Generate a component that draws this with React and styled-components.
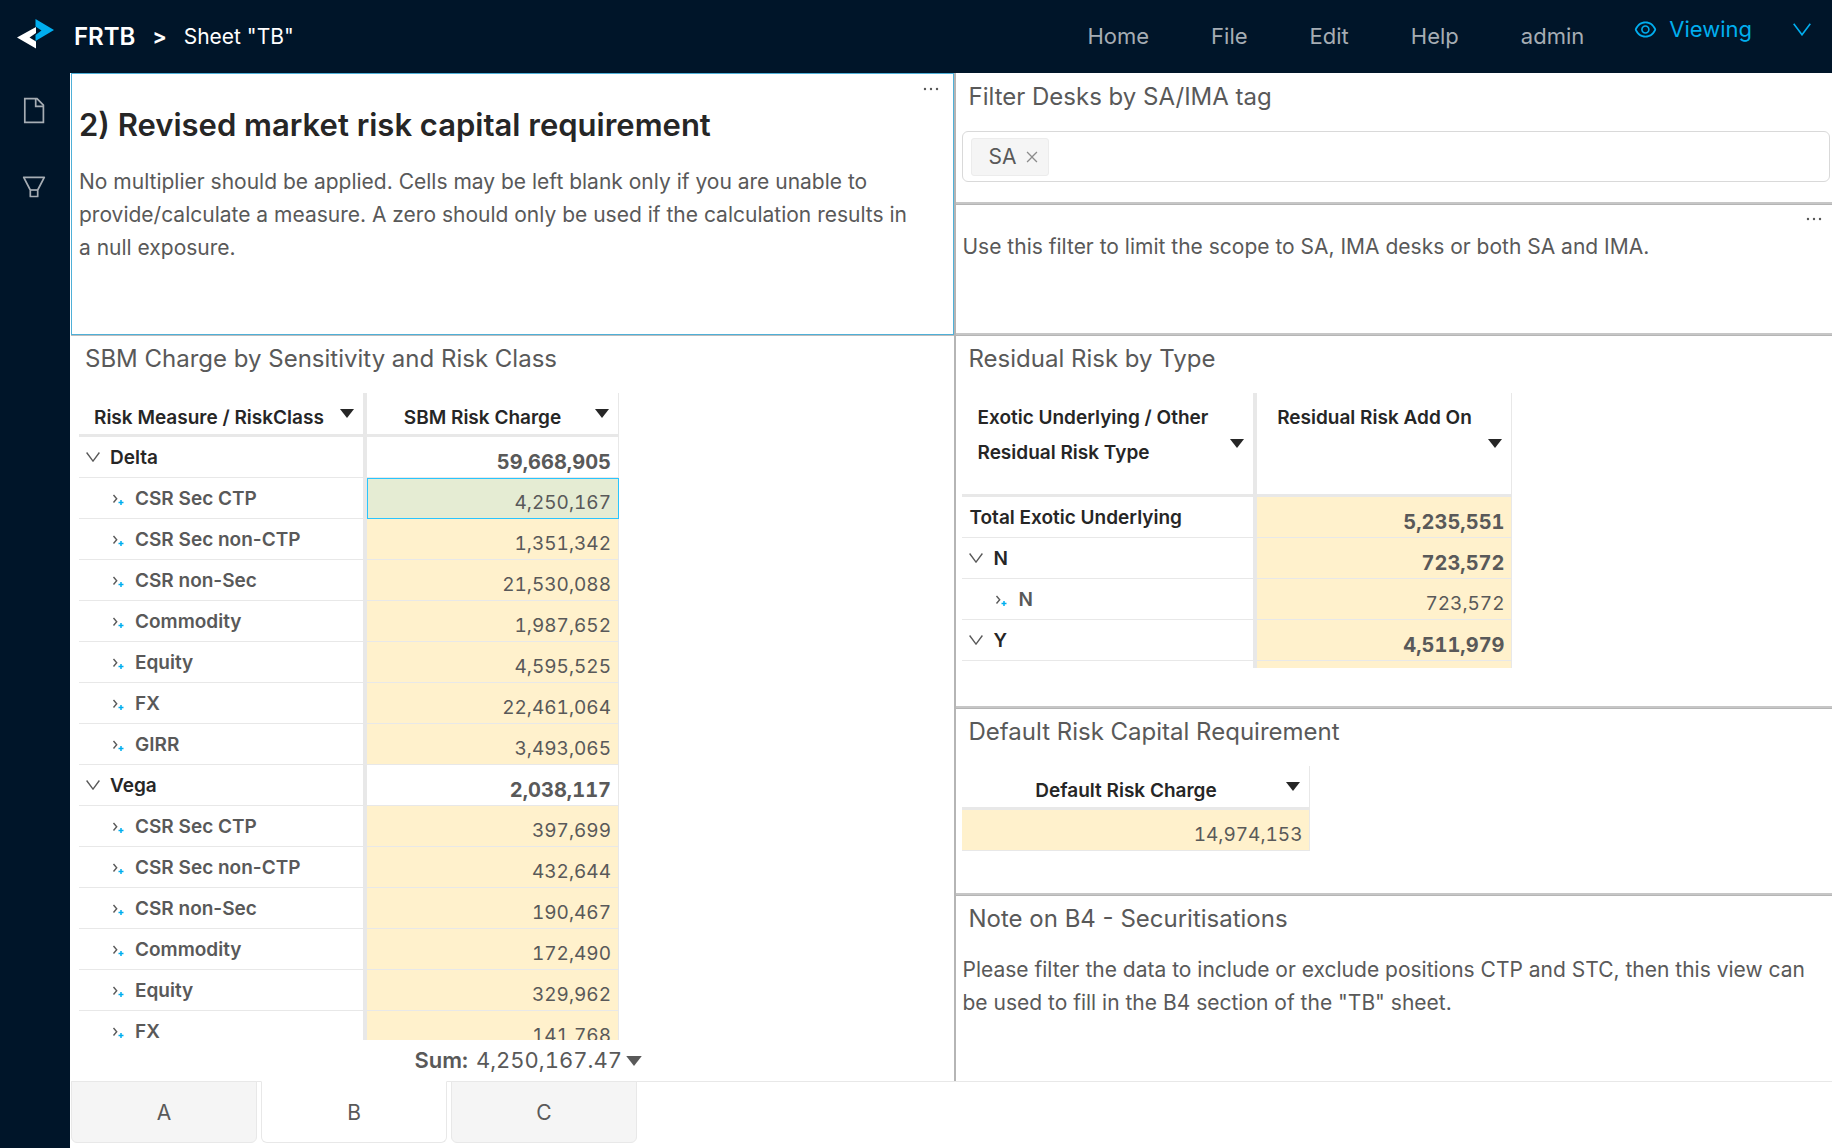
import React from "react";
import styled, { createGlobalStyle, css } from "styled-components";
import { AiOutlineEye, AiOutlineClose, AiOutlineEllipsis } from "react-icons/ai";

const GlobalStyle = createGlobalStyle`
  *, *::before, *::after { box-sizing: border-box; }
  body {
    margin: 0;
    font-family: Inter, "Liberation Sans", sans-serif;
    font-size: 21px;
    line-height: 33px;
    color: #595959;
    background: #fff;
  }
  button, input { font: inherit; color: inherit; }
  button { padding: 0; border: 0; background: none; cursor: pointer; }
  h1, h2, p { margin: 0; }
  svg { display: block; flex: none; }
`;

const Page = styled.div`
  display: flex;
  flex-direction: column;
  height: 100vh;
  min-height: 720px;
`;

const Header = styled.header`
  display: flex;
  flex: none;
  align-items: flex-start;
  height: 73px;
  padding: 0 21px 0 17px;
  background: #001529;
`;

const Breadcrumb = styled.div`
  display: flex;
  flex: 1;
  align-items: center;
  height: 73px;
  color: #fff;
  white-space: pre;
`;

const Logo = styled.svg`
  margin: 0 20px 6px 0;
`;

const AppName = styled.span`
  font-size: 24px;
  font-weight: 600;
`;

const Separator = styled.span`
  margin: 0 17px;
  font-weight: 700;
`;

const Menu = styled.nav`
  display: flex;
  align-items: center;
  gap: 62px;
  height: 73px;
`;

const MenuButton = styled.button`
  font-size: 22px;
  color: #a6adb4;
`;

const ModeButton = styled.button`
  display: flex;
  align-items: center;
  height: 58px;
  margin-left: 49px;
  font-size: 22px;
  color: #00aeef;
`;

const ModeLabel = styled.span`
  margin: 0 41px 0 11px;
`;

const Body = styled.div`
  display: flex;
  flex: 1;
  min-height: 0;
`;

const Sidebar = styled.aside`
  display: flex;
  flex: none;
  flex-direction: column;
  align-items: center;
  gap: 52px;
  width: 70px;
  padding: 24px 3px 0 0;
  color: #a6adb4;
  background: #001529;
`;

const Main = styled.main`
  display: flex;
  flex: 1;
  flex-direction: column;
  min-width: 0;
  padding-left: 1px;
`;

const Dashboard = styled.div`
  display: grid;
  flex: 1;
  grid-template-columns: minmax(0, 442fr) minmax(0, 439fr);
  min-height: 0;
`;

const Column = styled.div`
  display: grid;
  grid-template-rows: ${(p) => p.$rows};
  min-height: 0;
  border-left: ${(p) => (p.$divided ? "2px solid #b5b5b5" : "0")};
`;

const Panel = styled.section`
  position: relative;
  display: flex;
  flex-direction: column;
  min-height: 0;
  padding: 0 2px 0 ${(p) => (p.$left ? 8 : 6)}px;
  ${(p) =>
    !p.$last &&
    css`
      border-bottom: 2px solid #c6c6c6;
      box-shadow: 0 1px #b5b5b5;
    `}
  ${(p) =>
    p.$selected &&
    css`
      padding: 0 34px 0 7px;
      border: 1px solid #4fb0d8;
      box-shadow: 0 1px #bdbdbd;
    `}
`;

const PanelTitle = styled.h2`
  flex: none;
  padding: 7px 6px 18px;
  font-size: 24px;
  font-weight: 400;
`;

const Heading = styled.h1`
  margin: 30px 0 19px;
  font-size: 31px;
  font-weight: 600;
  line-height: 42px;
  color: #262626;
`;

const Text = styled.p`
  padding-top: ${(p) => p.$top || 0}px;
`;

const MoreButton = styled.button`
  position: absolute;
  top: 4px;
  right: ${(p) => p.$right}px;
`;

const TagBox = styled.div`
  display: flex;
  align-items: center;
  height: 51px;
  padding: 0 8px;
  border: 1px solid #d9d9d9;
  border-radius: 6px;
`;

const Tag = styled.span`
  display: flex;
  align-items: center;
  gap: 8px;
  height: 38px;
  padding: 0 8px 0 16px;
  border: 1px solid #ececec;
  border-radius: 3px;
  background: #f5f5f5;
`;

const TagRemove = styled.button`
  color: #8c8c8c;
`;

const TagInput = styled.input`
  flex: 1;
  min-width: 0;
  border: 0;
  outline: 0;
  background: none;
`;

const TableView = styled.div`
  flex: ${(p) => (p.$fill ? "1" : "none")};
  min-height: 0;
  max-height: ${(p) => (p.$maxHeight ? p.$maxHeight + "px" : "none")};
  overflow: hidden;
`;

const Table = styled.table`
  width: ${(p) => p.$width}px;
  table-layout: fixed;
  border-collapse: separate;
  border-spacing: 0;
  font-size: 19px;
`;

const Col = styled.col`
  width: ${(p) => p.$width}px;
`;

const HeadCell = styled.th`
  height: ${(p) => (p.$tall ? 104 : 44)}px;
  padding: 7px 9px 0 ${(p) => (p.$rowHead ? 15 : 3)}px;
  border-right: ${(p) => (p.$rowHead ? 4 : 1)}px solid #e8e8e8;
  border-bottom: 3px solid #e8e8e8;
  line-height: 35px;
  font-weight: 600;
  color: #262626;
  vertical-align: top;
`;

const HeadInner = styled.div`
  display: flex;
  align-items: ${(p) => (p.$tall ? "center" : "flex-start")};
  height: ${(p) => (p.$tall ? 86 : 34)}px;
`;

const HeadLabel = styled.span`
  flex: 1;
  align-self: flex-start;
  text-align: ${(p) => (p.$rowHead ? "left" : "center")};
`;

const SortButton = styled.button`
  flex: none;
  padding-top: ${(p) => (p.$tall ? 0 : 9)}px;
`;

const RowHead = styled.th`
  height: 41px;
  padding: 0 7px;
  border-right: 4px solid #e8e8e8;
  border-bottom: 1px solid #e8e8e8;
  font-weight: 600;
  text-align: left;
  color: ${(p) => (p.$level === 2 ? "#595959" : "#262626")};
`;

const RowLabel = styled.div`
  display: flex;
  align-items: center;
  padding-left: ${(p) => (p.$level === 2 ? 26 : 0)}px;
`;

const Expander = styled.button`
  margin-right: 10px;
  color: #595959;
`;

const Cell = styled.td`
  height: 41px;
  padding: 10px 7px 0;
  border-right: 1px solid #e8e8e8;
  border-bottom: 1px solid #e8e8e8;
  font-size: ${(p) => (p.$bold ? 20 : 19)}px;
  font-weight: ${(p) => (p.$bold ? 700 : 400)};
  font-variant-numeric: tabular-nums;
  line-height: 30px;
  text-align: right;
  background: ${(p) => (p.$plain ? "#fff" : "#fff1cc")};
  ${(p) =>
    p.$selected &&
    css`
      border-color: #29c5ff;
      box-shadow: inset 1px 1px #29c5ff;
      background: #e5ecd3;
    `}
`;

const SumBar = styled.div`
  display: flex;
  flex: none;
  align-items: center;
  gap: 4px;
  width: 563px;
  height: 41px;
  justify-content: flex-end;
  font-size: 22px;
  font-variant-numeric: tabular-nums;
`;

const SumLabel = styled.strong`
  margin-right: 4px;
  font-weight: 600;
`;

const TabBar = styled.div`
  display: flex;
  flex: none;
  gap: 4px;
  height: 67px;
  border-top: 1px solid #e8e8e8;
`;

const Tab = styled.button`
  width: 186px;
  height: 62px;
  margin-top: -1px;
  border: 1px solid #e8e8e8;
  border-top-color: ${(p) => (p.$active ? "#fff" : "#e8e8e8")};
  border-radius: 0 0 6px 6px;
  background: ${(p) => (p.$active ? "#fff" : "#f5f5f5")};
`;

const FileIcon = () => (
  <svg width="22" height="27" viewBox="0 0 22 27" fill="none" stroke="currentColor" strokeWidth="1.7">
    <path d="M1.8 1.6H14L20.4 8.2V25.4H1.8Z" />
    <path d="M12.7 1.6V9.3H20.4" />
  </svg>
);

const FilterIcon = () => (
  <svg width="24" height="22" viewBox="0 0 24 22" fill="none" stroke="currentColor" strokeWidth="1.7">
    <path d="M1.7 1.3H22.3L15.7 14V20.5H8.3V14Z" strokeLinejoin="round" />
    <path d="M8.3 14H15.7" />
  </svg>
);

const CaretIcon = ({ width = 14, height = 9 }) => (
  <svg width={width} height={height} viewBox="0 0 14 9" fill="currentColor">
    <path d="M0 0H14L7 9Z" />
  </svg>
);

const ChevronIcon = ({ width, height, stroke }) => (
  <svg width={width} height={height} viewBox="0 0 18 13" fill="none">
    <path d="M0.7 0.7L9 11.8L17.3 0.7" stroke="currentColor" strokeWidth={stroke} />
  </svg>
);

const ExpandIcon = () => (
  <svg width="13" height="16" viewBox="0 0 13 16" fill="none">
    <path d="M1.5 5L4.7 8.7L1.5 12.5" stroke="currentColor" strokeWidth="1.4" />
    <path d="M6.5 12.5H11.5M9 10V15" stroke="#00aeef" strokeWidth="1.5" />
  </svg>
);

const Head = ({ label, rowHead, tall }) => (
  <HeadCell scope="col" $rowHead={rowHead} $tall={tall}>
    <HeadInner $tall={tall}>
      <HeadLabel $rowHead={rowHead}>{label}</HeadLabel>
      <SortButton type="button" aria-label={"Sort " + label} $tall={tall}>
        <CaretIcon />
      </SortButton>
    </HeadInner>
  </HeadCell>
);

const Row = ({ label, value, level, plain, selected, bold }) => (
  <tr>
    <RowHead scope="row" $level={level}>
      <RowLabel $level={level}>
        {level > 0 && (
          <Expander type="button" aria-label={"Toggle " + label}>
            {level === 1 ? <ChevronIcon width={14} height={10} stroke={1.8} /> : <ExpandIcon />}
          </Expander>
        )}
        {label}
      </RowLabel>
    </RowHead>
    <Cell $plain={plain} $selected={selected} $bold={bold}>
      {value}
    </Cell>
  </tr>
);

const sbmRows = [
  { label: "Delta", value: "59,668,905", level: 1, plain: true, bold: true },
  { label: "CSR Sec CTP", value: "4,250,167", level: 2, selected: true },
  { label: "CSR Sec non-CTP", value: "1,351,342", level: 2 },
  { label: "CSR non-Sec", value: "21,530,088", level: 2 },
  { label: "Commodity", value: "1,987,652", level: 2 },
  { label: "Equity", value: "4,595,525", level: 2 },
  { label: "FX", value: "22,461,064", level: 2 },
  { label: "GIRR", value: "3,493,065", level: 2 },
  { label: "Vega", value: "2,038,117", level: 1, plain: true, bold: true },
  { label: "CSR Sec CTP", value: "397,699", level: 2 },
  { label: "CSR Sec non-CTP", value: "432,644", level: 2 },
  { label: "CSR non-Sec", value: "190,467", level: 2 },
  { label: "Commodity", value: "172,490", level: 2 },
  { label: "Equity", value: "329,962", level: 2 },
  { label: "FX", value: "141,768", level: 2 },
];

const residualRows = [
  { label: "Total Exotic Underlying", value: "5,235,551", level: 0, bold: true },
  { label: "N", value: "723,572", level: 1, bold: true },
  { label: "N", value: "723,572", level: 2 },
  { label: "Y", value: "4,511,979", level: 1, bold: true },
  { label: "", value: "", level: 0 },
];

const menuItems = ["Home", "File", "Edit", "Help", "admin"];
const tabs = ["A", "B", "C"];

export default function App() {
  return (
    <Page>
      <GlobalStyle />
      <Header>
        <Breadcrumb>
          <Logo width="37" height="30" viewBox="0 0 37 30">
            <path d="M18.5 0L37 11L18.5 22V16L24.5 11.5L18.5 7.5Z" fill="#00aeef" />
            <path d="M19 8V14L12.5 18.5L19 22.5V29.5L0 18.5Z" fill="#fff" />
          </Logo>
          <AppName>FRTB</AppName>
          <Separator>&gt;</Separator>
          <span>Sheet "TB"</span>
        </Breadcrumb>
        <Menu>
          {menuItems.map((item) => (
            <MenuButton type="button" key={item}>
              {item}
            </MenuButton>
          ))}
        </Menu>
        <ModeButton type="button">
          <AiOutlineEye size={25} />
          <ModeLabel>Viewing</ModeLabel>
          <ChevronIcon width={18} height={13} stroke={1.6} />
        </ModeButton>
      </Header>
      <Body>
        <Sidebar>
          <button type="button" aria-label="Files">
            <FileIcon />
          </button>
          <button type="button" aria-label="Filters">
            <FilterIcon />
          </button>
        </Sidebar>
        <Main>
          <Dashboard>
            <Column $rows="minmax(0, 26fr) minmax(0, 74fr)">
              <Panel $selected>
                <MoreButton type="button" aria-label="More" $right={11}>
                  <AiOutlineEllipsis size={22} />
                </MoreButton>
                <Heading>2) Revised market risk capital requirement</Heading>
                <Text>
                  No multiplier should be applied. Cells may be left blank only if you are unable to
                  provide/calculate a measure. A zero should only be used if the calculation results
                  in a null exposure.
                </Text>
              </Panel>
              <Panel $left $last>
                <PanelTitle>SBM Charge by Sensitivity and Risk Class</PanelTitle>
                <TableView $fill>
                  <Table $width={540}>
                    <colgroup>
                      <Col $width={288} />
                      <Col $width={252} />
                    </colgroup>
                    <thead>
                      <tr>
                        <Head label="Risk Measure / RiskClass" rowHead />
                        <Head label="SBM Risk Charge" />
                      </tr>
                    </thead>
                    <tbody>
                      {sbmRows.map((row, i) => (
                        <Row key={i} {...row} />
                      ))}
                    </tbody>
                  </Table>
                </TableView>
                <SumBar>
                  <SumLabel>Sum:</SumLabel>
                  <span>4,250,167.47</span>
                  <button type="button" aria-label="Change aggregate">
                    <CaretIcon width={16} height={10} />
                  </button>
                </SumBar>
              </Panel>
            </Column>
            <Column
              $divided
              $rows="minmax(0, 26fr) minmax(0, 26fr) minmax(0, 74fr) minmax(0, 37fr) minmax(0, 37fr)"
            >
              <Panel>
                <PanelTitle as="label" htmlFor="desk-tags">
                  Filter Desks by SA/IMA tag
                </PanelTitle>
                <TagBox>
                  <Tag>
                    SA
                    <TagRemove type="button" aria-label="Remove SA">
                      <AiOutlineClose size={16} />
                    </TagRemove>
                  </Tag>
                  <TagInput id="desk-tags" />
                </TagBox>
              </Panel>
              <Panel>
                <MoreButton type="button" aria-label="More" $right={7}>
                  <AiOutlineEllipsis size={22} />
                </MoreButton>
                <Text $top={26}>
                  Use this filter to limit the scope to SA, IMA desks or both SA and IMA.
                </Text>
              </Panel>
              <Panel>
                <PanelTitle>Residual Risk by Type</PanelTitle>
                <TableView $maxHeight={275}>
                  <Table $width={550}>
                    <colgroup>
                      <Col $width={295} />
                      <Col $width={255} />
                    </colgroup>
                    <thead>
                      <tr>
                        <Head label="Exotic Underlying / Other Residual Risk Type" rowHead tall />
                        <Head label="Residual Risk Add On" tall />
                      </tr>
                    </thead>
                    <tbody>
                      {residualRows.map((row, i) => (
                        <Row key={i} {...row} />
                      ))}
                    </tbody>
                  </Table>
                </TableView>
              </Panel>
              <Panel>
                <PanelTitle>Default Risk Capital Requirement</PanelTitle>
                <TableView>
                  <Table $width={348}>
                    <thead>
                      <tr>
                        <Head label="Default Risk Charge" />
                      </tr>
                    </thead>
                    <tbody>
                      <tr>
                        <Cell>14,974,153</Cell>
                      </tr>
                    </tbody>
                  </Table>
                </TableView>
              </Panel>
              <Panel $last>
                <PanelTitle>Note on B4 - Securitisations</PanelTitle>
                <Text>
                  Please filter the data to include or exclude positions CTP and STC, then this view
                  can be used to fill in the B4 section of the "TB" sheet.
                </Text>
              </Panel>
            </Column>
          </Dashboard>
          <TabBar>
            {tabs.map((tab) => (
              <Tab type="button" key={tab} $active={tab === "B"}>
                {tab}
              </Tab>
            ))}
          </TabBar>
        </Main>
      </Body>
    </Page>
  );
}
